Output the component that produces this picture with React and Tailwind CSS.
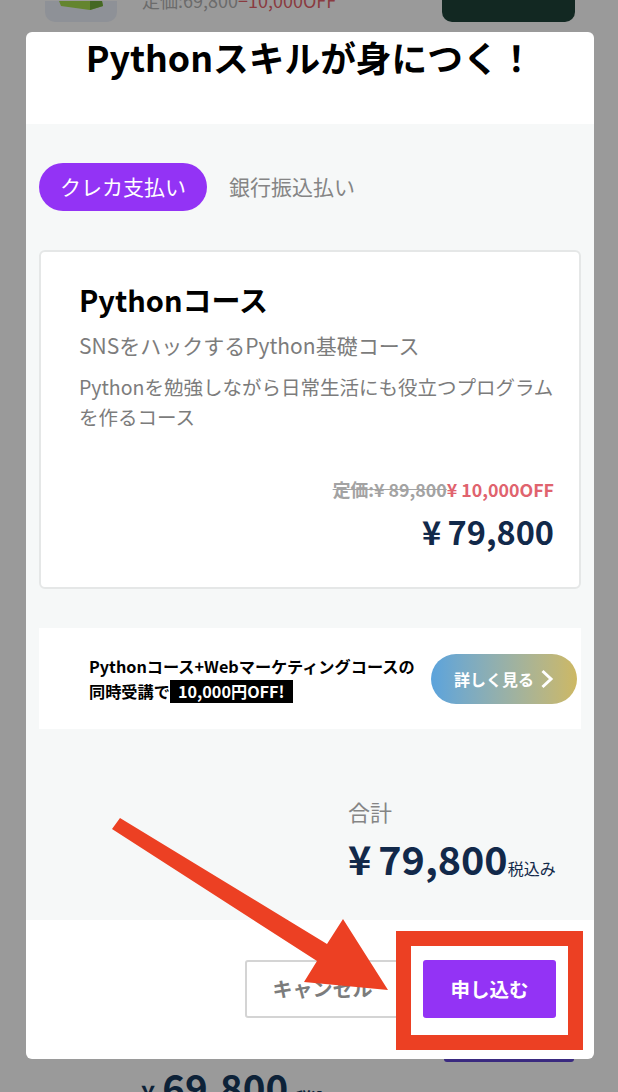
import React from 'react';

const font = "font-['Noto_Sans_CJK_JP',sans-serif]";

function BackgroundPage() {
    return (
        <div className="flex flex-col justify-between h-full">
            <div className="flex items-end justify-between pl-[45px] pr-[43px] h-[22px]">
                <div className="relative w-[72px] h-[21px] rounded-b-[10px] bg-[#8e9197] overflow-hidden">
                    <svg className="absolute left-[13px] top-0" width="46" height="10" viewBox="0 0 46 10">
                        <path d="M1 0 L3 5 L32 9 L45 5 L44 0 Z" fill="#64852f" />
                        <path d="M32 0 L32 9 L45 5 L44 0 Z" fill="#456824" />
                    </svg>
                </div>
                <div className="flex-1 pl-[25px] self-start -mt-[10px] text-[18px] leading-[20px] whitespace-nowrap">
                    <span className="text-[#6b6b6b]">定価:69,800</span>
                    <span className="text-[#8a3b40]">−10,000OFF</span>
                </div>
                <div className="w-[133px] h-[22px] rounded-b-[10px] bg-[#122822]"></div>
            </div>
            <div className="relative h-[33px]">
                <div className="absolute right-[44px] top-0 w-[130px] h-[3px] rounded-b-[10px] bg-[#3a2a80]"></div>
                <div className="absolute left-[141px] top-[4px] flex items-baseline whitespace-nowrap font-bold text-[#0d2238]">
                    <span className="text-[24px] leading-[46px]">¥</span>
                    <span className="ml-[7px] text-[38.5px] leading-[46px]">69,800</span>
                    <span className="ml-[8px] text-[15px]">税込</span>
                </div>
            </div>
        </div>
    );
}

function Modal() {
    return (
        <div className="absolute left-[26px] top-[32px] w-[568px] h-[1027px] flex flex-col rounded-[6px] bg-white overflow-hidden">
            <div className="h-[92px] shrink-0 text-center text-[35.7px] leading-[50px] font-bold text-black whitespace-nowrap">
                Pythonスキルが身につく！
            </div>

            <div className="h-[796px] shrink-0 bg-[#f6f8f8] px-[13px] pt-[39px]">
                <div className="flex items-center">
                    <div className="w-[168px] h-[48px] flex items-center justify-center rounded-full bg-[#9333f5] text-[21px] text-white">
                        クレカ支払い
                    </div>
                    <div className="ml-[22px] text-[21px] text-[#858585]">銀行振込払い</div>
                </div>

                <div className="mt-[39px] h-[339px] flex flex-col rounded-[6px] border-2 border-[#e5e7e7] bg-white pl-[38px] pr-[25px] pt-[25px]">
                    <div className="text-[29px] leading-[44px] font-bold text-black">Pythonコース</div>
                    <div className="mt-[8px] text-[21px] leading-[32px] text-[#7c7c7c]">SNSをハックするPython基礎コース</div>
                    <div className="mt-[11px] text-[19.5px] leading-[30px] text-[#7c7c7c]">
                        Pythonを勉強しながら日常生活にも役立つプログラムを作るコース
                    </div>
                    <div className="mt-[44px] text-right text-[17.8px] leading-[26px] font-bold">
                        <span className="line-through text-[#a3a3a3]">定価:¥ 89,800</span>
                        <span className="text-[#e0636e]">¥ 10,000OFF</span>
                    </div>
                    <div className="mt-[7px] text-right text-[32.5px] leading-[44px] font-bold text-[#12294a] [word-spacing:-1px]">¥ 79,800</div>
                </div>

                <div className="mt-[39px] h-[101px] flex items-center bg-white pl-[50px] pr-[4px]">
                    <div className="flex-1 text-[16.2px] leading-[25px] font-bold text-black whitespace-nowrap">
                        <div>Pythonコース+Webマーケティングコースの</div>
                        <div>
                            同時受講で<span className="inline-block px-[8px] h-[23px] leading-[23px] bg-black text-white">10,000円OFF!</span>
                        </div>
                    </div>
                    <div className="w-[146px] h-[50px] flex items-center justify-center gap-[6px] rounded-full bg-gradient-to-r from-[#5ba3dc] to-[#cdb863] text-[16px] font-bold text-white">
                        詳しく見る
                        <svg width="14" height="20" viewBox="0 0 14 20" fill="none" stroke="#fff" strokeWidth="3">
                            <path d="M2.5 2 L11 10 L2.5 18" />
                        </svg>
                    </div>
                </div>

                <div className="mt-[64px] pl-[309px]">
                    <div className="text-[22px] leading-[36px] text-[#858585]">合計</div>
                    <div className="mt-[1px] flex items-baseline whitespace-nowrap text-[#12294a]">
                        <span className="text-[39.5px] leading-[56px] font-bold [word-spacing:-2px]">¥ 79,800</span>
                        <span className="text-[16px]">税込み</span>
                    </div>
                </div>
            </div>

            <div className="flex-1 flex items-start justify-end pt-[40px] pr-[38px]">
                <div className="w-[155px] h-[58px] flex items-center justify-center rounded-[3px] border-2 border-[#d4d4d4] text-[20px] font-bold text-[#7c7c7c]">
                    キャンセル
                </div>
                <div className="ml-[23px] w-[133px] h-[58px] flex items-center justify-center rounded-[3px] bg-[#9333f5] text-[19.5px] font-bold text-white">
                    申し込む
                </div>
            </div>
        </div>
    );
}

export default function App() {
    return (
        <div className={`relative w-[618px] h-[1092px] overflow-hidden bg-[#9a9a9a] ${font}`}>
            <BackgroundPage />
            <Modal />
            {/* annotation drawn over the screenshot */}
            <svg className="absolute left-0 top-0 pointer-events-none" width="618" height="1092" viewBox="0 0 618 1092">
                <path d="M112 829 L120 818 L327 944 L343 919 L388 990 L304 982 L317 961 Z" fill="#ec4023" />
                <rect x="403.5" y="938.5" width="172" height="104" fill="none" stroke="#ec4023" strokeWidth="15" />
            </svg>
        </div>
    );
}
